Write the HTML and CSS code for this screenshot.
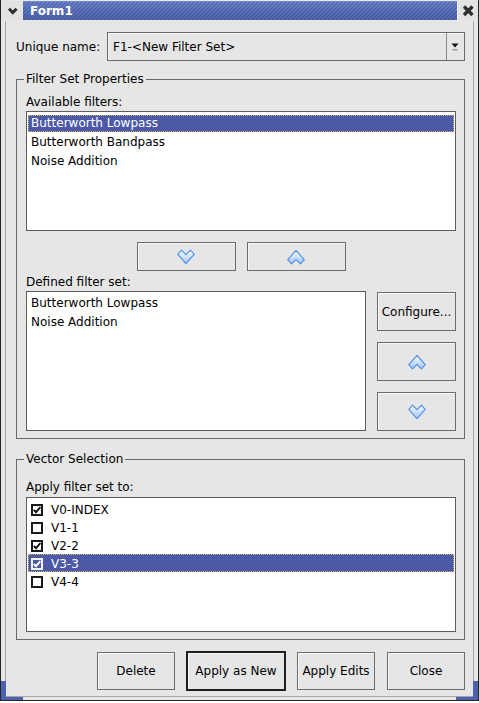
FILE: index.html
```html
<!DOCTYPE html>
<html>
<head>
<meta charset="utf-8">
<title>Form1</title>
<link rel="stylesheet" href="styles.css">
</head>
<body>
<div class="window">
  <div class="titlebar">
    <div class="tb-btn tb-menu">
      <svg width="22" height="19" viewBox="0 0 22 19"><polyline points="8,7.8 11.8,11.6 15.6,7.8" fill="none" stroke="#2e2e2e" stroke-width="3"/></svg>
    </div>
    <div class="tb-title">Form1</div>
    <div class="tb-btn tb-close">
      <svg width="20" height="19" viewBox="0 0 20 19"><path d="M6,5.5 L14.5,14 M14.5,5.5 L6,14" stroke="#2e2e2e" stroke-width="3.3"/></svg>
    </div>
  </div>
  <div class="frame">
    <div class="client">
      <div class="name-row">
        <span class="name-label">Unique name:</span>
        <div class="combo">
          <span class="combo-text">F1-&lt;New Filter Set&gt;</span>
          <span class="combo-btn">
            <svg width="17" height="27" viewBox="0 0 17 27"><path d="M4.5,10.5 L11.5,10.5 L8,14.5 Z" fill="#111"/><rect x="5.5" y="16" width="5" height="1.5" fill="#9a9a9a"/></svg>
          </span>
        </div>
      </div>

      <fieldset class="group g1">
        <legend>Filter Set Properties</legend>
        <div class="lbl">Available filters:</div>
        <div class="list list1">
          <div class="item sel">Butterworth Lowpass</div>
          <div class="item">Butterworth Bandpass</div>
          <div class="item">Noise Addition</div>
        </div>
        <div class="move-row">
          <button class="btn move-btn">
            <svg width="18" height="16" viewBox="0 0 18 16"><defs><linearGradient id="gd1" x1="0" y1="0" x2="0" y2="1"><stop offset="0" stop-color="#f8fbff"/><stop offset="1" stop-color="#a4c6f2"/></linearGradient></defs><path d="M0.8,5.3 L4.5,1.2 L9,5.7 L13.5,1.2 L17.2,5.3 L9,14.6 Z" fill="url(#gd1)" stroke="#4f92e6" stroke-width="1.2" stroke-linejoin="round"/></svg>
          </button>
          <button class="btn move-btn">
            <svg width="18" height="16" viewBox="0 0 18 16"><defs><linearGradient id="gu1" x1="0" y1="0" x2="0" y2="1"><stop offset="0" stop-color="#f8fbff"/><stop offset="1" stop-color="#a4c6f2"/></linearGradient></defs><path d="M0.8,10.7 L4.5,14.8 L9,10.3 L13.5,14.8 L17.2,10.7 L9,1.4 Z" fill="url(#gu1)" stroke="#4f92e6" stroke-width="1.2" stroke-linejoin="round"/></svg>
          </button>
        </div>
        <div class="lbl lbl2">Defined filter set:</div>
        <div class="defined-row">
          <div class="list list2">
            <div class="item">Butterworth Lowpass</div>
            <div class="item">Noise Addition</div>
          </div>
          <div class="side-btns">
            <button class="btn side-btn">Configure...</button>
            <button class="btn side-btn">
              <svg width="18" height="16" viewBox="0 0 18 16"><defs><linearGradient id="gu2" x1="0" y1="0" x2="0" y2="1"><stop offset="0" stop-color="#f8fbff"/><stop offset="1" stop-color="#a4c6f2"/></linearGradient></defs><path d="M0.8,10.7 L4.5,14.8 L9,10.3 L13.5,14.8 L17.2,10.7 L9,1.4 Z" fill="url(#gu2)" stroke="#4f92e6" stroke-width="1.2" stroke-linejoin="round"/></svg>
            </button>
            <button class="btn side-btn">
              <svg width="18" height="16" viewBox="0 0 18 16"><defs><linearGradient id="gd2" x1="0" y1="0" x2="0" y2="1"><stop offset="0" stop-color="#f8fbff"/><stop offset="1" stop-color="#a4c6f2"/></linearGradient></defs><path d="M0.8,5.3 L4.5,1.2 L9,5.7 L13.5,1.2 L17.2,5.3 L9,14.6 Z" fill="url(#gd2)" stroke="#4f92e6" stroke-width="1.2" stroke-linejoin="round"/></svg>
            </button>
          </div>
        </div>
      </fieldset>

      <fieldset class="group g2">
        <legend>Vector Selection</legend>
        <div class="lbl">Apply filter set to:</div>
        <div class="list list3">
          <div class="crow"><span class="cb on"><svg width="8" height="8" viewBox="0 0 8 8"><polyline points="0.8,3.8 3,6.2 7.4,1" fill="none" stroke="#111" stroke-width="1.9"/></svg></span>V0-INDEX</div>
          <div class="crow"><span class="cb"></span>V1-1</div>
          <div class="crow"><span class="cb on"><svg width="8" height="8" viewBox="0 0 8 8"><polyline points="0.8,3.8 3,6.2 7.4,1" fill="none" stroke="#111" stroke-width="1.9"/></svg></span>V2-2</div>
          <div class="crow sel"><span class="cb on"><svg width="8" height="8" viewBox="0 0 8 8"><polyline points="0.8,3.8 3,6.2 7.4,1" fill="none" stroke="#fff" stroke-width="1.9"/></svg></span>V3-3</div>
          <div class="crow"><span class="cb"></span>V4-4</div>
        </div>
      </fieldset>

      <div class="actions">
        <button class="btn act">Delete</button>
        <button class="btn act default">Apply as New</button>
        <button class="btn act">Apply Edits</button>
        <button class="btn act close">Close</button>
      </div>
    </div>
  </div>
  <div class="corner corner-bl"></div>
  <div class="corner corner-br"></div>
</div>
</body>
</html>
```

FILE: styles.css
```css
* { box-sizing: border-box; }

html, body {
  margin: 0;
  padding: 0;
  background: #ffffff;
}

body {
  font-family: "DejaVu Sans", "Liberation Sans", sans-serif;
  font-size: 12px;
  line-height: 14px;
  color: #000;
}

.window {
  position: relative;
  width: 479px;
  height: 701px;
  background: #e6e6e6;
  border-left: 1px solid #262626;
  border-right: 1px solid #262626;
  border-bottom: 1px solid #262626;
  display: flex;
  flex-direction: column;
}

/* title bar */
.titlebar {
  height: 21px;
  display: flex;
  padding: 1px 0 1px 0;
}

.tb-btn {
  height: 19px;
  background: #e2e2e2;
  display: flex;
  align-items: center;
  justify-content: center;
}

.tb-menu { width: 22px; }
.tb-close { width: 21px; border-left: 1px solid #f2f2f2; }

.tb-title {
  flex: 1;
  height: 19px;
  padding-left: 7px;
  color: #fff;
  font-weight: bold;
  font-size: 12px;
  background:
    repeating-linear-gradient(135deg, rgba(255,255,255,0.16) 0 1px, rgba(255,255,255,0) 1px 2.83px),
    linear-gradient(#5c71bd, #4257a4);
  border-top: 1px solid #7587c8;
  line-height: 18px;
}

/* frame */
.frame {
  flex: 1;
  padding: 0 4px 3px 4px;
  display: flex;
}

.client {
  flex: 1;
  border: 1px solid #a6a6a6;
  border-top: 0;
  padding: 11px 8px 0 10px;
  display: flex;
  flex-direction: column;
}

.name-row {
  display: flex;
  align-items: center;
  height: 29px;
}

.name-label {
  width: 91px;
}

.combo {
  flex: 1;
  height: 29px;
  border: 1px solid #6a6a6a;
  display: flex;
  align-items: center;
  box-shadow: inset 1px 1px 0 #f6f6f6;
}

.combo-text {
  flex: 1;
  padding-left: 5px;
}

.combo-btn {
  width: 18px;
  height: 27px;
  border-left: 1px solid #8a8a8a;
  display: flex;
}

/* group boxes */
.group {
  margin: 11px 0 0 0;
  padding: 9px 8px 7px 9px;
  border: 1px solid #6a6a6a;
  min-width: 0;
}

.group legend {
  padding: 0 2px;
  margin-left: -2px;
  line-height: 14px;
}

.g2 {
  margin-top: 13px;
  padding-top: 14px;
}

.lbl {
  height: 14px;
}

.lbl2 {
  margin-top: 4px;
}

.list {
  background: #fff;
  border: 1px solid #5e5e5e;
  margin-top: 2px;
}

.list1 {
  height: 120px;
  padding: 3px 1px 0 1px;
}

.list2 {
  width: 340px;
  height: 140px;
  padding: 3px 1px 0 1px;
  margin-top: 0;
}

.list3 {
  height: 135px;
  margin-top: 3px;
  padding: 2px 1px 0 1px;
}

.item {
  height: 17px;
  line-height: 14px;
  padding-left: 2px;
  margin-bottom: 2px;
  border: 1px solid transparent;
}

.item.sel, .crow.sel {
  background: #4b59a6;
  color: #fff;
  border: 1px dotted #cdb766;
}

.crow {
  height: 18px;
  line-height: 14px;
  display: flex;
  align-items: center;
  padding-left: 2px;
  padding-top: 2px;
  border: 1px solid transparent;
}

.cb {
  width: 12px;
  height: 12px;
  border: 2px solid #1a1a1a;
  background: #fff;
  margin-right: 8px;
  display: flex;
  align-items: center;
  justify-content: center;
}

.crow.sel .cb {
  border-color: #f2f2f2;
  background: #4b59a6;
}

/* buttons */
.btn {
  font-family: inherit;
  font-size: 12px;
  color: #000;
  background: #e6e6e6;
  border: 1px solid #6c6c6c;
  box-shadow: inset 1px 1px 0 #f7f7f7;
  padding: 0;
  margin: 0;
  display: flex;
  align-items: center;
  justify-content: center;
}

.move-row {
  display: flex;
  justify-content: center;
  gap: 11px;
  margin-top: 11px;
}

.move-btn {
  width: 99px;
  height: 29px;
}

.defined-row {
  display: flex;
  gap: 11px;
  margin-top: 2px;
}

.side-btns {
  width: 79px;
  display: flex;
  flex-direction: column;
  gap: 11px;
  padding-top: 1px;
}

.side-btn {
  height: 39px;
}

.actions {
  display: flex;
  justify-content: flex-end;
  align-items: center;
  gap: 11px;
  margin-top: 12px;
  height: 38px;
}

.act {
  width: 78px;
  height: 38px;
}

.act.default {
  width: 100px;
  height: 40px;
  border: 2px solid #1e1e1e;
}

.act.close {
  margin-left: 1px;
}

/* frame corner handles */
.corner {
  position: absolute;
  bottom: 0;
  width: 22px;
  height: 19px;
  border-bottom: 3px solid #4d61ae;
}

.corner-bl {
  left: 0;
  border-left: 5px solid #4d61ae;
}

.corner-br {
  right: 0;
  border-right: 5px solid #4d61ae;
}
```
